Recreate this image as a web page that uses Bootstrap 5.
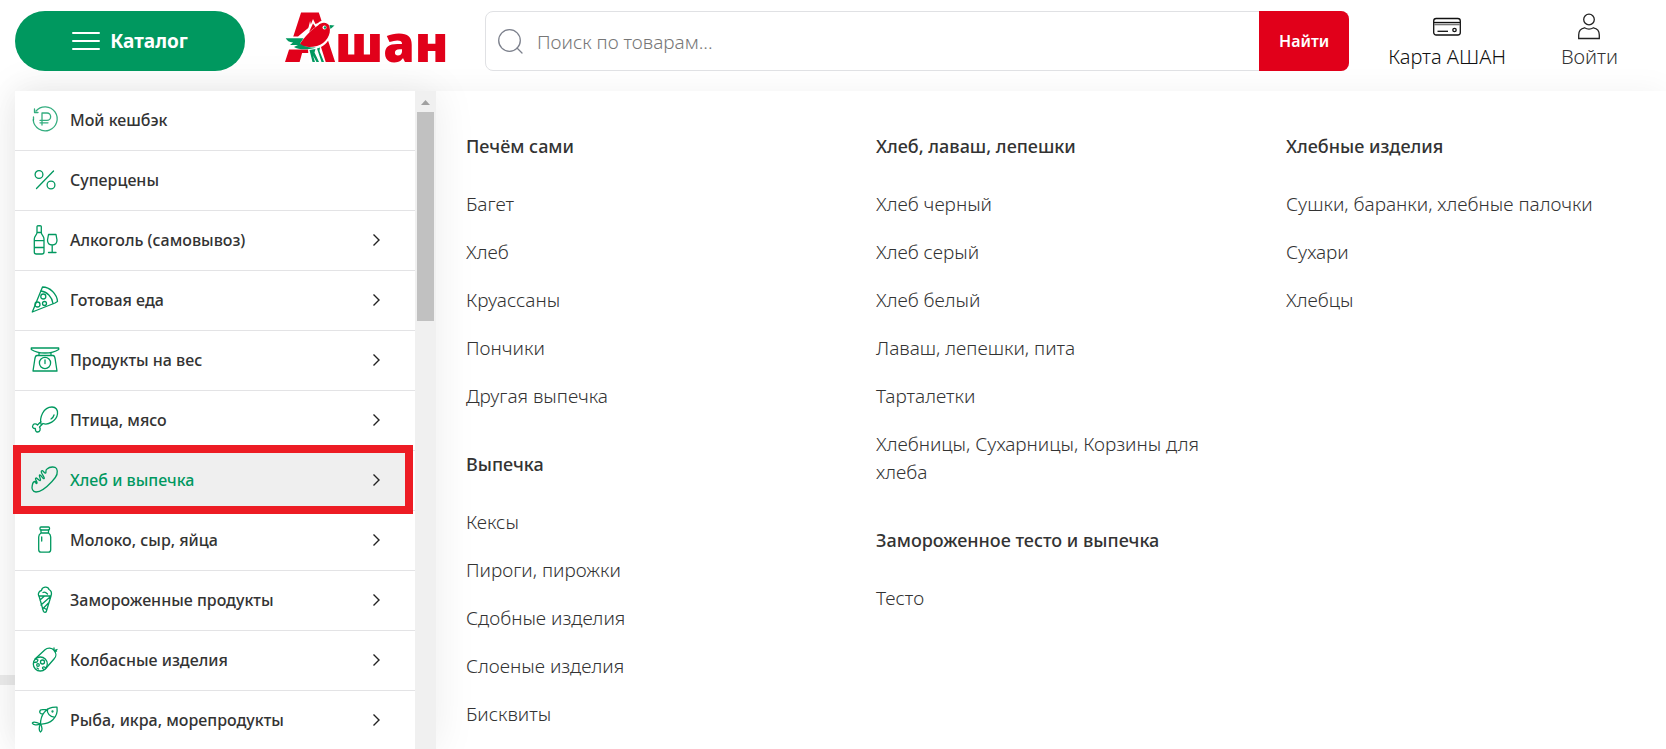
<!DOCTYPE html>
<html lang="ru">
<head>
<meta charset="utf-8">
<meta name="viewport" content="width=device-width, initial-scale=1">
<title>Ашан — каталог</title>
<link href="https://cdn.jsdelivr.net/npm/bootstrap@5.3.0/dist/css/bootstrap.min.css" rel="stylesheet">
<style>
  :root { --green: #00985f; --red: #e1001a; --ink: #333; --line: #e3e3e5; }
  body { font-family: "Noto Sans", "Open Sans", sans-serif; color: var(--ink); background: #fff; height: 100vh; overflow: hidden; }
  a { color: inherit; text-decoration: none; }
  svg { overflow: visible; flex: none; }

  .site-header { height: 91px; padding: 11px 48px 0 15px; z-index: 2; }
  .btn-catalog { width: 230px; height: 60px; border-radius: 30px; background: var(--green); color: #fff; font-size: 19px; font-weight: 700; gap: 10px; border: 0; }
  .btn-catalog:hover { background: #00874f; color: #fff; }
  .brand-link { margin: 0 39px 0 40px; }
  .search-box { height: 60px; border: 1px solid #e0e1e4; border-radius: 8px; background: #fff; }
  .search-box svg { margin: 0 14px 0 12px; }
  .search-box .form-control { border: 0; background: none; font-size: 19px; font-weight: 300; padding: 2px 0 0; color: #555; box-shadow: none; }
  .search-box .form-control::placeholder { color: #777; }
  .btn-find { width: 90px; margin: -1px; border-radius: 0 8px 8px 0; background: var(--red); color: #fff; font-size: 16px; font-weight: 600; border: 0; }
  .user-link { height: 60px; color: #111; font-size: 20px; font-weight: 300; line-height: 32px; padding-top: 2px; white-space: nowrap; }
  .card-link-item { margin-left: 39px; }
  .login-link-item { margin-left: 55px; color: #333; }

  .page-strip { left: 0; top: 675px; height: 10px; background: #ececec; z-index: -1; }
  .catalog-menu { margin-left: 15px; min-height: 0; box-shadow: 0 0 30px rgba(0,0,0,.05); }
  .cat-side { width: 421px; background: #fff; box-shadow: 0 0 40px rgba(0,0,0,.08); z-index: 1; }
  .cat-panel { background: #fff; padding: 41px 0 0 30px; }

  .cat-item { height: 60px; padding: 0 35px 1px 15px; gap: 12px; border-bottom: 1px solid var(--line); font-size: 16px; font-weight: 500; isolation: isolate; }
  .cat-item .cat-icon { width: 28px; height: 28px; fill: none; stroke: var(--green); stroke-width: 1.3; stroke-linecap: round; stroke-linejoin: round; }
  .cat-item .chev { width: 7px; height: 12px; fill: none; stroke: #222; stroke-width: 1.4; margin-left: auto; }
  .cat-item.current { color: var(--green); position: relative; }
  .cat-item.current::before { content: ""; position: absolute; inset: -6px 2px -4px -2px; border: 8px solid #ed1c24; background: #efefef; z-index: -1; }

  .scroll-track { width: 21px; background: #f0f0f0; padding: 9px 2px 0; }
  .scroll-thumb { height: 209px; background: #c1c1c1; margin-top: 7px; }

  .cat-col { width: 410px; padding-right: 50px; }
  .cat-col h2 { font-size: 18px; font-weight: 500; line-height: 28px; margin: 0 0 30px; }
  .cat-col ul { margin: 0 0 40px; }
  .cat-col li { font-size: 19px; font-weight: 300; line-height: 28px; margin-bottom: 20px; color: #333; }
  .cat-col li:last-child { margin-bottom: 0; }
</style>
</head>
<body class="d-flex flex-column">

<header class="site-header d-flex align-items-start position-relative flex-shrink-0">
  <button type="button" class="btn btn-catalog d-flex align-items-center justify-content-center flex-shrink-0">
    <svg width="28" height="18" viewBox="0 0 28 18" stroke="#fff" stroke-width="2" stroke-linecap="round"><path d="M1 1H27M1 9H27M1 17H27"/></svg>
    Каталог
  </button>

  <a href="#" class="brand-link" aria-label="Ашан">
    <svg width="161" height="56" viewBox="0 0 161 56" font-family="Noto Sans, sans-serif" font-weight="900" fill="#e1001a">
      <text x="0" y="51" font-size="69">А</text>
      <text x="50" y="51" font-size="51">шан</text>
      <!-- bird over the letter -->
      <path d="M-3 25.500H13L25 15.500L28 8L30.500 13L33 12C37 8 43 8.500 45.500 12L50 13V16L46 20C46 27 42 33 36 36L41 52H24L23 38.500L3 38.500Z" fill="#fff"/>
      <path d="M14 34.500C20 25 26 19 33 14.500C36.500 10.500 43 11 44.500 15.500C46.500 24 41 32 32 35C26 36.500 19 36 14 34.500Z"/>
      <path d="M24 21L28 12.500L30.500 16Z"/>
      <path d="M.7 27.300H18.500L15 32.500C18 35.500 25 37 31 36.500C25 39 13 39 9 36L13 34H5L8 31.500C4 31.500 2 29.500 .7 27.300Z" fill="#00985f"/>
      <path d="M44.500 14L49.500 14.500L45.500 18ZM24.500 39L30.500 38L29.500 41.500L34 51H31.500L28 44.500L30 51H27.500ZM32 37.500L35 36.500L34.500 40L39 51H36.500Z" fill="#00985f"/>
      <circle cx="39.500" cy="16.500" r="2" fill="#fff"/><circle cx="40" cy="16.500" r="1.200" fill="#00985f"/>
    </svg>
  </a>

  <form class="search-box d-flex flex-grow-1 align-items-stretch" role="search">
    <label for="q" class="d-flex align-items-center m-0" aria-label="Поиск">
      <svg width="25" height="25" viewBox="0 0 25 25" fill="none" stroke="#7c808c" stroke-width="1.300" stroke-linecap="round"><circle cx="11.500" cy="11.500" r="10.800"/><path d="M19 19L24 24"/></svg>
    </label>
    <input id="q" type="text" class="form-control" placeholder="Поиск по товарам...">
    <button type="button" class="btn btn-find flex-shrink-0 p-0">Найти</button>
  </form>

  <a href="#" class="user-link card-link-item d-flex flex-column align-items-center">
    <svg width="28" height="28" viewBox="0 0 28 28" fill="none" stroke="#111" stroke-width="1.300"><rect x=".7" y="5.500" width="26.600" height="16.500" rx="2.500"/><path d="M1 9.500H27"/><path d="M1 11.500H27" stroke="#777" stroke-width="1.600"/><path d="M4.500 18.300H15"/><circle cx="21.500" cy="17" r="1.700"/></svg>
    Карта АШАН
  </a>
  <a href="#" class="user-link login-link-item d-flex flex-column align-items-center">
    <svg width="28" height="28" viewBox="0 0 28 28" fill="none" stroke="#222" stroke-width="1.300"><circle cx="14" cy="6.500" r="5.300"/><path d="M3.700 25.500V22C3.700 18 5.500 15.500 9.500 14.800C12 16.200 16 16.200 18.500 14.800C22.500 15.500 24.300 18 24.300 22V25.500Z"/></svg>
    Войти
  </a>
</header>

<div class="page-strip position-absolute w-100"></div>

<main class="catalog-menu d-flex flex-grow-1">
  <aside class="cat-side d-flex flex-shrink-0 position-relative">
    <nav class="flex-grow-1" aria-label="Каталог">
      <a href="#" class="cat-item d-flex align-items-center">
        <svg class="cat-icon" viewBox="0 0 28 28" stroke-opacity=".8"><path d="M6 5A12 12 0 1 1 3.200 14"/><path d="M4.500 3V6.500H8M3.500 14V11" /><path d="M12 19V7H17A3.500 3.500 0 0 1 17 14.300H10M10 16.800H18"/></svg>
        Мой кешбэк
      </a>
      <a href="#" class="cat-item d-flex align-items-center">
        <svg class="cat-icon" viewBox="0 0 28 28"><circle cx="9" cy="8.500" r="3.900"/><circle cx="21" cy="19" r="3.900"/><path d="M6.500 22.500L23.500 5"/></svg>
        Суперцены
      </a>
      <a href="#" class="cat-item d-flex align-items-center">
        <svg class="cat-icon" viewBox="0 0 28 28"><path d="M7 .5C7-.5 11.300-.5 11.300.5V6.500C11.300 9 14 10 14 13V26C14 27.500 13 28 12 28H6.300C5.300 28 4.300 27.500 4.300 26V13C4.300 10 7 9 7 6.500ZM7 6.500H11.300M4.300 14.700H14M4.300 21.500H14"/><path d="M18.500 8.500H26L27 14C27 17.500 25 19 22.200 19S17.500 17.500 17.500 14ZM22.200 19V26.500M18.500 26.500H26"/></svg>
        Алкоголь (самовывоз)
        <svg class="chev" viewBox="0 0 7 12"><path d="M.5.5L6 6L.5 11.500"/></svg>
      </a>
      <a href="#" class="cat-item d-flex align-items-center">
        <svg class="cat-icon" viewBox="0 0 28 28"><path d="M2.300 26L12.500 1C20 1 27 8 27.500 15.500L25 17L2.300 26Z"/><path d="M11 5C17 5.500 22 11 23 17.500"/><circle cx="13.300" cy="10.500" r="2.500"/><circle cx="7.500" cy="18.500" r="2.500"/><circle cx="14.500" cy="17.500" r="2"/></svg>
        Готовая еда
        <svg class="chev" viewBox="0 0 7 12"><path d="M.5.5L6 6L.5 11.500"/></svg>
      </a>
      <a href="#" class="cat-item d-flex align-items-center">
        <svg class="cat-icon" viewBox="0 0 28 28"><path d="M1.300 2H28.700V3.500C25 6 20 7 15 7S5 6 1.300 3.500ZM9 7V9.500M21 7V9.500M7 9.500H23C25 9.500 25 12 25.300 14L27 25H3L4.700 14C5 12 5 9.500 7 9.500Z"/><circle cx="15" cy="17" r="5.600"/><path d="M15 14V17.500"/></svg>
        Продукты на вес
        <svg class="chev" viewBox="0 0 7 12"><path d="M.5.5L6 6L.5 11.500"/></svg>
      </a>
      <a href="#" class="cat-item d-flex align-items-center">
        <svg class="cat-icon" viewBox="0 0 28 28"><path d="M11 18C9.500 12 13 1 22 1C26 1 28 4 27.500 8C26.500 15 18 19.500 13 17.500L9.500 21C11 23 10 26 7.500 26C5.500 26 5.300 24 5.300 22.500C3 22.500 2 21 2.800 19.500C3.500 17.500 6 17.500 7.500 19L11 15.500"/><path d="M24 9C23.500 11 22.500 12 21 13"/></svg>
        Птица, мясо
        <svg class="chev" viewBox="0 0 7 12"><path d="M.5.5L6 6L.5 11.500"/></svg>
      </a>
      <a href="#" class="cat-item current d-flex align-items-center" aria-current="page">
        <svg class="cat-icon" viewBox="0 0 28 28"><path d="M17 3C20 .5 25 .3 26.500 2.500C28.500 6 27 10.500 22 15.500C16 22 11 26 6 26C2.500 26 1.500 22.500 2.300 19C2.700 17 3.500 15.500 5 15.500C6 15.500 5.500 18 6.800 17.500C8 17 5 13.500 5.500 12.500C6.500 10.500 9 15.500 10.200 14.500C11.500 13.500 8.500 10 9.500 9C10.500 8 13 13.500 14.200 12.500C15.300 11.500 10 6.500 11.500 5C13 3.500 14.500 8 15.700 7C16.500 6 15 4 17 3Z"/></svg>
        Хлеб и выпечка
        <svg class="chev" viewBox="0 0 7 12"><path d="M.5.5L6 6L.5 11.500"/></svg>
      </a>
      <a href="#" class="cat-item d-flex align-items-center">
        <svg class="cat-icon" viewBox="0 0 28 28"><rect x="10" y="1" width="9.500" height="3" rx="1"/><path d="M11 4V7C9.500 8 8.700 9 8.700 11V23.500C8.700 25.500 9.500 26.200 11 26.200H18.500C20 26.200 20.700 25.500 20.700 23.500V11C20.700 9 20 8 18.500 7V4M11 7H18.500M11.700 11V15"/></svg>
        Молоко, сыр, яйца
        <svg class="chev" viewBox="0 0 7 12"><path d="M.5.5L6 6L.5 11.500"/></svg>
      </a>
      <a href="#" class="cat-item d-flex align-items-center">
        <svg class="cat-icon" viewBox="0 0 28 28"><path d="M8.700 10C7.500 7 9.500 5 11.500 4.500C12 .5 18 0 19 3.500C21 4.500 22 7 21 10ZM9 10L13.500 25.500C14 26.500 16 26.500 16.300 25.500L21 10M10 14L14.500 10M11 19L20 11M12.500 23L19 16.500M14 22L16.500 23.500M13 6.500C15 5.500 16.500 7 17.500 8"/></svg>
        Замороженные продукты
        <svg class="chev" viewBox="0 0 7 12"><path d="M.5.5L6 6L.5 11.500"/></svg>
      </a>
      <a href="#" class="cat-item d-flex align-items-center">
        <svg class="cat-icon" viewBox="0 0 28 28"><circle cx="10.300" cy="18" r="7"/><path d="M5 13L15 3.800C17.500 1.500 22 1.500 24 4.500C26.500 7 26.500 10.500 24 13L15.500 22.800M24 4.500L26.500 5M24 4.500V2M24 4.500L27 3.500"/><circle cx="12.500" cy="16" r="2"/><circle cx="8" cy="19" r="1.300"/><path d="M6 13L8 14L7 16L4 16.500M14 23.500C11 22 13 20 15.500 21.500M7 22L8.500 23"/></svg>
        Колбасные изделия
        <svg class="chev" viewBox="0 0 7 12"><path d="M.5.5L6 6L.5 11.500"/></svg>
      </a>
      <a href="#" class="cat-item d-flex align-items-center">
        <svg class="cat-icon" viewBox="0 0 28 28"><path d="M10.500 18C10.500 10 15 .5 27 1.200C28.500 12 20 18.500 10.500 18ZM10.500 18C6 16 3 16 2.300 17C3 19 7 19.500 10.500 18ZM10.500 18C8.500 21 9 25 10.500 26C12.500 25 12.500 21 10.500 18ZM17.500 3C16.500 7 20 11.500 25 11M13 8C9.500 8 9 6 10.500 4C12 3 15 4 16 3.500"/><circle cx="22.500" cy="5.500" r=".5"/></svg>
        Рыба, икра, морепродукты
        <svg class="chev" viewBox="0 0 7 12"><path d="M.5.5L6 6L.5 11.500"/></svg>
      </a>
    </nav>
    <div class="scroll-track" aria-hidden="true">
      <svg class="d-block mx-auto" width="9" height="5" viewBox="0 0 9 5"><path d="M4.500 0L9 5H0Z" fill="#a0a0a0"/></svg>
      <div class="scroll-thumb"></div>
    </div>
  </aside>

  <section class="cat-panel d-flex flex-grow-1">
    <div class="cat-col">
      <h2>Печём сами</h2>
      <ul class="list-unstyled">
        <li><a href="#">Багет</a></li>
        <li><a href="#">Хлеб</a></li>
        <li><a href="#">Круассаны</a></li>
        <li><a href="#">Пончики</a></li>
        <li><a href="#">Другая выпечка</a></li>
      </ul>
      <h2>Выпечка</h2>
      <ul class="list-unstyled">
        <li><a href="#">Кексы</a></li>
        <li><a href="#">Пироги, пирожки</a></li>
        <li><a href="#">Сдобные изделия</a></li>
        <li><a href="#">Слоеные изделия</a></li>
        <li><a href="#">Бисквиты</a></li>
      </ul>
    </div>
    <div class="cat-col">
      <h2>Хлеб, лаваш, лепешки</h2>
      <ul class="list-unstyled">
        <li><a href="#">Хлеб черный</a></li>
        <li><a href="#">Хлеб серый</a></li>
        <li><a href="#">Хлеб белый</a></li>
        <li><a href="#">Лаваш, лепешки, пита</a></li>
        <li><a href="#">Тарталетки</a></li>
        <li><a href="#">Хлебницы, Сухарницы, Корзины для хлеба</a></li>
      </ul>
      <h2>Замороженное тесто и выпечка</h2>
      <ul class="list-unstyled">
        <li><a href="#">Тесто</a></li>
      </ul>
    </div>
    <div class="cat-col">
      <h2>Хлебные изделия</h2>
      <ul class="list-unstyled">
        <li><a href="#">Сушки, баранки, хлебные палочки</a></li>
        <li><a href="#">Сухари</a></li>
        <li><a href="#">Хлебцы</a></li>
      </ul>
    </div>
  </section>
</main>

<script src="https://cdn.jsdelivr.net/npm/bootstrap@5.3.0/dist/js/bootstrap.bundle.min.js"></script>
</body>
</html>
